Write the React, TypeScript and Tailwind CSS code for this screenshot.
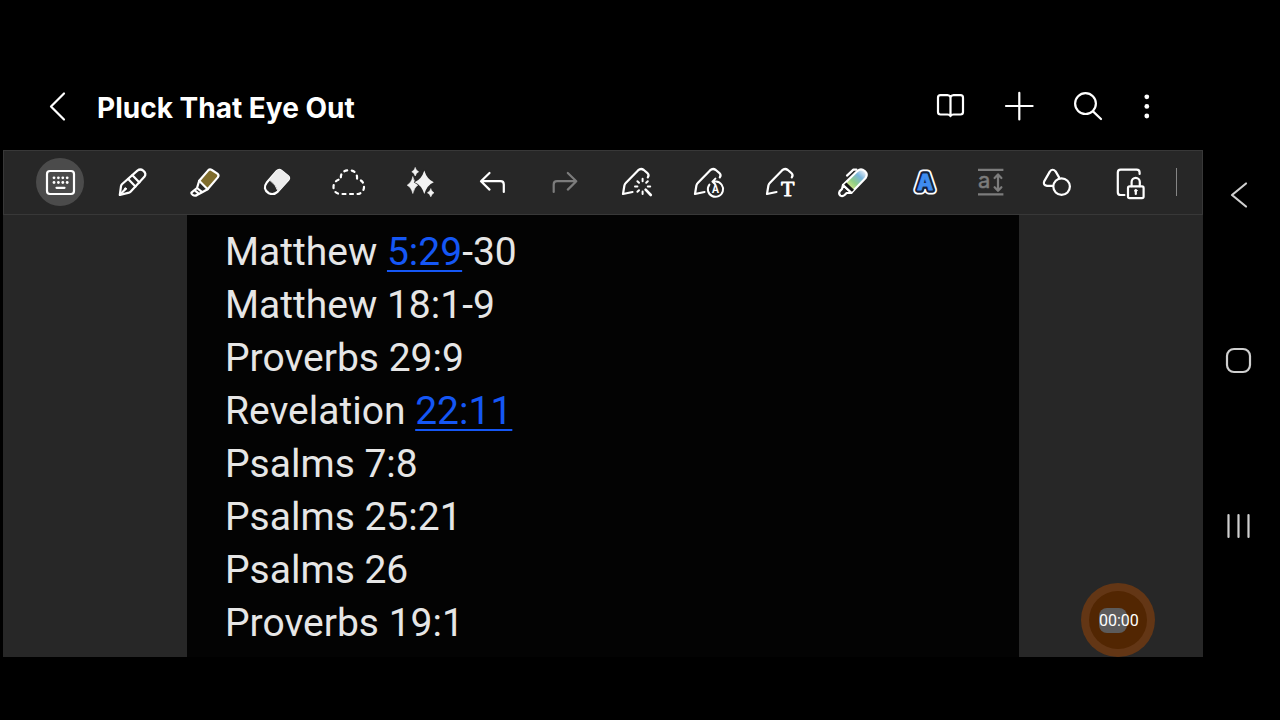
import type { ReactNode } from "react";

const verses = [
  { book: "Matthew ", link: "5:29", rest: "-30" },
  { book: "Matthew ", link: "", rest: "18:1-9" },
  { book: "Proverbs ", link: "", rest: "29:9" },
  { book: "Revelation ", link: "22:11", rest: "" },
  { book: "Psalms ", link: "", rest: "7:8" },
  { book: "Psalms ", link: "", rest: "25:21" },
  { book: "Psalms ", link: "", rest: "26" },
  { book: "Proverbs ", link: "", rest: "19:1" },
];

type IconProps = { children: ReactNode; width?: number };

const Icon = ({ children, width = 48 }: IconProps) => (
  <svg
    width={width}
    height={48}
    viewBox={`0 0 ${width} 48`}
    fill="none"
    stroke="currentColor"
    strokeWidth={2.2}
    strokeLinecap="round"
    strokeLinejoin="round"
    aria-hidden="true"
  >
    {children}
  </svg>
);

// pen outline shared by the three handwriting tools
const PenOutline = () => (
  <path d="M20.5 34 L11 36 L12.4 27.5 Q12.8 26 14 24.8 L26 12.4 Q28.8 9.8 31.8 12 L35.2 14.8 Q37.6 17 35.8 19.4" />
);

const tools = [
  {
    label: "Keyboard",
    icon: (
      <Icon>
        <rect x="11" y="13" width="27" height="23" rx="3" />
        <g fill="currentColor" stroke="none">
          {[18, 22.4, 26.8, 31.2].map((x) => (
            <g key={x}>
              <circle cx={x} cy="19.8" r="1.4" />
              <circle cx={x} cy="24.5" r="1.4" />
            </g>
          ))}
        </g>
        <path d="M20.5 29.8H28.5" />
      </Icon>
    ),
  },
  {
    label: "Pen",
    icon: (
      <Icon>
        <path d="M11.8 37 L13 28.2 Q13.2 27 14.2 26 L29.4 12.6 Q32.4 10.4 35.2 12.6 Q38.8 15.6 36.4 18.8 L23 33.2 Q22.2 34.2 21 34.6 Z" />
        <path d="M20.2 21 L27.4 28.6 M24.4 17.2 L31.4 24.4 M12.2 36.4 L17.2 31.2" />
        <circle cx="17.4" cy="30.8" r="1" fill="currentColor" strokeWidth="1" />
      </Icon>
    ),
  },
  {
    label: "Highlighter",
    icon: (
      <Icon>
        <path d="M19.2 22.8 L28.2 12.4 Q29.8 10.8 31.8 12 L37.4 15.6 Q39.4 17.2 37.8 19.4 L27.6 31.2 Z" fill="#7f6c2c" />
        <path d="M19.2 22.8 L17 30 L22.2 34.2 L27.6 31.2 M17 30 L11.4 34.6 Q11 36 12.6 36.8 Q15 38.4 17 37 L22.2 34.2 M14.6 32.2 L18.6 35.6" />
      </Icon>
    ),
  },
  {
    label: "Eraser",
    icon: (
      <Icon>
        <path d="M15 24.2 L24.8 13 Q27 10.8 29.2 12.6 L36 18 Q38 19.8 36.2 22 L25.8 33.6 Q21.8 37.4 16.8 35.2 Q10 31 15 24.2 Z" />
        <path
          d="M17.6 22 L24.8 13 Q27 10.8 29.2 12.6 L36 18 Q38 19.8 36.2 22 L26 33.4 Q24.6 27 17.6 22 Z"
          fill="#ececec"
          stroke="#ececec"
          strokeWidth="1"
        />
      </Icon>
    ),
  },
  {
    label: "Lasso",
    icon: (
      <Icon>
        <path
          d="M17 21 C16 15 20 12.3 25 12.3 C30 12.3 33.6 15 33 21 C38 22 40 25 40 29 C40 33 37 36 33 36 H17 C12 36 9.5 33 9.5 29 C9.5 25 12 22 17 21"
          strokeDasharray="3 4.5"
          strokeDashoffset="-1.5"
        />
      </Icon>
    ),
  },
  {
    label: "Assist",
    icon: (
      <Icon>
        <g fill="#f2f2f2" stroke="#f2f2f2" strokeWidth="0.6">
          <path d="M16.8 19 Q18.4 25 22 27 Q18.4 29 16.8 35.5 Q15.2 29 11.2 27.2 Q15.2 25 16.8 19Z" />
          <path
            d="M28.3 12.5 Q31 21.4 37.8 24.2 Q31 27 28.3 36 Q25.6 27 18.6 24.2 Q25.6 21.4 28.3 12.5Z"
            stroke="#272727"
            strokeWidth="1.4"
            paintOrder="stroke"
          />
          <path d="M19.2 9.8 Q20.2 13 22.6 13.8 Q20.2 14.6 19.2 18 Q18.2 14.6 15.8 13.8 Q18.2 13 19.2 9.8Z" />
          <path d="M34.8 31 Q35.8 34 38 34.8 Q35.8 35.6 34.8 38.8 Q33.8 35.6 31.4 34.8 Q33.8 34 34.8 31Z" />
        </g>
      </Icon>
    ),
  },
  {
    label: "Undo",
    icon: (
      <Icon>
        <path d="M21.5 15 L13 23.2 L21.5 31.6 M13.4 23.2 H32.5 Q35.8 23.2 35.8 26.5 V34" />
      </Icon>
    ),
  },
  {
    label: "Redo",
    dim: true,
    icon: (
      <Icon>
        <path d="M27.8 15 L36.3 23.2 L27.8 31.6 M35.9 23.2 H17 Q13.7 23.2 13.7 26.5 V34" />
      </Icon>
    ),
  },
  {
    label: "Tidy handwriting",
    icon: (
      <Icon>
        <PenOutline />
        <path
          d="M30.6 20.8V23.2 M30.6 33.6V36 M23 28.6H25.4 M35.8 28.6H38.2 M25.4 23.2L27 24.8 M35.8 23.2L34.2 24.8 M25.4 33.8L27 32.2"
          strokeWidth="2"
        />
        <path d="M33.6 31.6L38.8 37" strokeWidth="2.6" />
      </Icon>
    ),
  },
  {
    label: "Change style",
    icon: (
      <Icon>
        <PenOutline />
        <path d="M28.6 23.6 H32 A7.6 7.6 0 1 1 25.4 26.6 M31.4 20.6 L28.4 23.6 L31.4 26.4" strokeWidth="2" />
        <text
          x="31.6"
          y="35"
          textAnchor="middle"
          fontFamily="Inter, sans-serif"
          fontSize="10"
          fontWeight="700"
          fill="currentColor"
          stroke="none"
        >
          A
        </text>
      </Icon>
    ),
  },
  {
    label: "Convert to text",
    icon: (
      <Icon>
        <PenOutline />
        <text
          x="31.8"
          y="38"
          textAnchor="middle"
          fontFamily="'Liberation Serif', serif"
          fontSize="22"
          fill="currentColor"
          strokeWidth="0.9"
        >
          T
        </text>
      </Icon>
    ),
  },
  {
    label: "Color marker",
    icon: (
      <Icon>
        <defs>
          <linearGradient id="marker" x1="20" y1="30" x2="36" y2="13" gradientUnits="userSpaceOnUse">
            <stop offset="0" stopColor="#dfe78a" />
            <stop offset="0.35" stopColor="#8fce84" />
            <stop offset="0.7" stopColor="#79b4dc" />
            <stop offset="1" stopColor="#e6edf6" />
          </linearGradient>
        </defs>
        <path d="M15 27 L29.6 12.8 Q33 10 36.8 13 Q40.4 16.2 37.6 20 L23.4 34.8 Z" fill="url(#marker)" />
        <path d="M15.4 27.4 L18.4 24.4 L26 31.8 L23.2 34.6 Z" fill="#151515" stroke="none" />
        <path d="M15 27 L14 31 L11.6 33.4 Q10.4 36 12.4 37.6 Q14.6 38.8 16.6 37 L18.6 35 L23.4 34.8 Z M19 17.6 L25.4 11.6 H28.4" />
      </Icon>
    ),
  },
  {
    label: "Text style",
    icon: (
      <Icon>
        <g fontFamily="Inter, sans-serif" fontSize="21" fontWeight="700" textAnchor="middle">
          <text x="25" y="32" fill="#fff" stroke="#fff" strokeWidth="9">A</text>
          <text x="25" y="32" fill="#14233d" stroke="#14233d" strokeWidth="5.4">A</text>
          <text x="25" y="32" fill="#3f8cf0" stroke="#3f8cf0" strokeWidth="1">A</text>
        </g>
      </Icon>
    ),
  },
  {
    label: "Line spacing",
    dim: true,
    narrow: true,
    icon: (
      <Icon width={36}>
        <path d="M6 11.8H31.4 M6 36.4H31.4" strokeLinecap="butt" />
        <path d="M26 17V32 M22.6 20L26 16.4L29.4 20 M22.6 29.2L26 32.8L29.4 29.2" />
        <text x="6" y="30.4" fontFamily="Inter, sans-serif" fontSize="22" fill="currentColor" strokeWidth="0.5">
          a
        </text>
      </Icon>
    ),
  },
  {
    label: "Shapes",
    icon: (
      <Icon>
        <path d="M20.6 27.8 H15 Q10.8 27.2 12.2 23.4 L17.8 13.6 Q20.6 10 23.6 13.4 L27.2 19.6" />
        <circle cx="29.6" cy="28.6" r="8.3" />
      </Icon>
    ),
  },
  {
    label: "Lock canvas",
    icon: (
      <Icon>
        <path d="M20.4 37 H16.6 Q13.8 37 13.8 34.2 V14.4 Q13.8 11.6 16.6 11.6 H32.6 Q35.6 11.6 35.6 14.4 V16" />
        <rect x="24" y="28.4" width="15.6" height="11.8" rx="1.6" />
        <path d="M27.6 28.2 V24 A4.1 4.1 0 0 1 35.8 24 V28.2" />
        <circle cx="31.8" cy="32.6" r="1.2" fill="currentColor" strokeWidth="1" />
        <path d="M31.8 33V36" />
      </Icon>
    ),
  },
];

const Header = () => (
  <header className="flex h-[86px] items-center pl-8 pr-10 text-white">
    <button aria-label="Back" className="h-12 w-12 shrink-0">
      <Icon>
        <path d="M29 10.5L16 23.5L29 36.5" />
      </Icon>
    </button>
    <h1 className="ml-[14px] flex-1 pt-px font-[Inter,sans-serif] text-[28px] leading-9 font-bold whitespace-nowrap">
      Pluck That Eye Out
    </h1>
    <div className="flex shrink-0 gap-5">
      <button aria-label="Reading view" className="h-12 w-12">
        <Icon>
          <path d="M23.5 14.2 Q22.6 12.2 20.5 12.2 H13.5 Q11 12.2 11 14.7 V29 Q11 31.5 13.5 31.5 H20.5 Q22.8 31.5 23.5 33.2 Q24.2 31.5 26.5 31.5 H33.5 Q36 31.5 36 29 V14.7 Q36 12.2 33.5 12.2 H26.5 Q24.4 12.2 23.5 14.2 V33" />
        </Icon>
      </button>
      <button aria-label="Add" className="h-12 w-12">
        <Icon>
          <path d="M24.3 9.8V36.4 M11 23H37.6" />
        </Icon>
      </button>
      <button aria-label="Search" className="h-12 w-12">
        <Icon>
          <circle cx="22.5" cy="20.6" r="10.4" />
          <path d="M30 28.4L38 36" />
        </Icon>
      </button>
      <button aria-label="More options" className="h-12 w-8">
        <Icon width={32}>
          <g fill="currentColor" stroke="none">
            <circle cx="15.8" cy="13.8" r="2.4" />
            <circle cx="15.8" cy="23.4" r="2.4" />
            <circle cx="15.8" cy="33" r="2.4" />
          </g>
        </Icon>
      </button>
    </div>
  </header>
);

const Toolbar = () => (
  <div className="flex gap-6 overflow-hidden border border-[#383838] bg-[#272727] pt-[7px] pb-2 pl-8">
    {tools.map((tool, index) => (
      <button
        key={tool.label}
        aria-label={tool.label}
        className={`h-12 shrink-0 rounded-full ${tool.narrow ? "w-9" : "w-12"} ${
          tool.dim ? "text-[#7c7c7c]" : "text-white"
        } ${index === 0 ? "bg-[#4b4b4b]" : ""}`}
      >
        {tool.icon}
      </button>
    ))}
    <div className="h-7 w-px shrink-0 self-center bg-[#858585]" />
  </div>
);

const Note = () => (
  <main className="relative flex flex-1 overflow-hidden bg-[#272727] px-[184px]">
    <div className="flex-1 bg-[#030303] pt-[11px] pl-[38px] font-[Roboto,sans-serif] text-[39px] leading-[53px] text-[#e6e6e6]">
      {verses.map((verse, index) => (
        <p key={index} className="whitespace-nowrap">
          {verse.book}
          {verse.link && (
            <a href="#" className="text-[#1557f5] underline decoration-2 underline-offset-[5px]">
              {verse.link}
            </a>
          )}
          {verse.rest}
        </p>
      ))}
    </div>
    <div className="absolute right-12 bottom-0 flex h-[74px] w-[74px] items-center justify-center rounded-full bg-[#633615]">
      <div className="flex h-[58px] w-[58px] items-center justify-center rounded-full bg-[#522602]">
        <div className="w-[38px]">
          <div className="h-[25px] w-7 rounded-lg bg-[#5c5b5b] font-[Roboto,sans-serif] text-base leading-[25px] text-white">
            00:00
          </div>
        </div>
      </div>
    </div>
  </main>
);

const SystemNav = () => (
  <nav className="flex w-[77px] shrink-0 flex-col items-center justify-around py-28 pr-2 text-[#cfcfcf]">
    <button aria-label="System back" className="h-12 w-12">
      <Icon>
        <path d="M32 12.5L18 24L32 35.5" />
      </Icon>
    </button>
    <button aria-label="Home" className="h-12 w-12">
      <Icon>
        <rect x="13" y="13" width="23" height="23" rx="7" />
      </Icon>
    </button>
    <button aria-label="Recent apps" className="h-12 w-12">
      <Icon>
        <path d="M14.5 14V36 M24.5 14V36 M34.5 14V36" />
      </Icon>
    </button>
  </nav>
);

export default function App() {
  return (
    <div className="flex min-h-screen bg-black">
      <div className="flex min-w-0 flex-1 flex-col pt-16 pb-[63px] pl-[3px]">
        <Header />
        <Toolbar />
        <Note />
      </div>
      <SystemNav />
    </div>
  );
}
